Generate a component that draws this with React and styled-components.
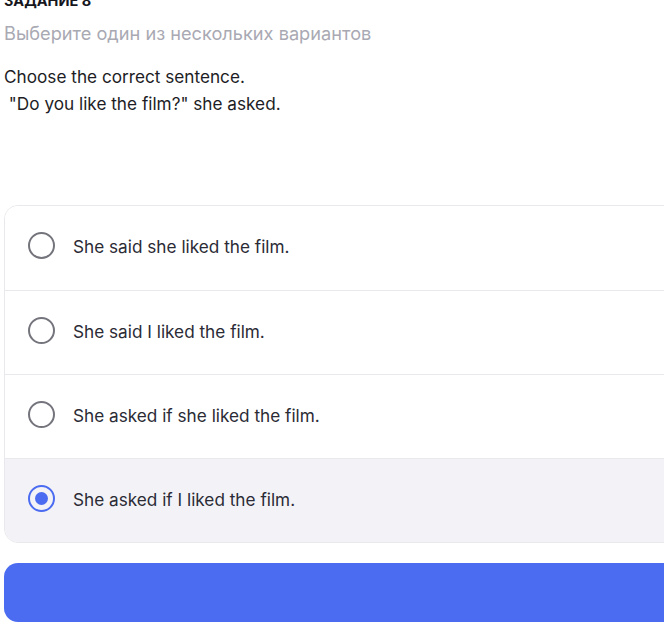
import React, { useState } from "react";
import styled, { createGlobalStyle } from "styled-components";

const Global = createGlobalStyle`
  html, body { margin: 0; padding: 0; background: #ffffff; overflow: hidden; }
  body { font-family: Inter, "Noto Sans", sans-serif; -webkit-font-smoothing: antialiased; }
`;

const Page = styled.div`
  width: 760px;
  padding: 0 0 0 4px;
  margin-top: -9px;
  box-sizing: border-box;
`;

const Title = styled.div`
  font-size: 14.5px;
  line-height: 20px;
  font-weight: 700;
  color: #16161d;
  text-transform: uppercase;
`;

const Subtitle = styled.div`
  margin-top: 8.5px;
  font-size: 18.2px;
  line-height: 27px;
  color: #a9a9b3;
`;

const Question = styled.div`
  margin-top: 16px;
  font-size: 17.2px;
  line-height: 27px;
  color: #1d1d25;
  white-space: pre-wrap;
`;

const Card = styled.div`
  margin-top: 88.5px;
  border: 1px solid #e8e8ed;
  border-radius: 14px;
  overflow: hidden;
`;

const Row = styled.label`
  display: flex;
  align-items: center;
  gap: 18px;
  height: 84px;
  padding: 0 0 5px 23px;
  box-sizing: border-box;
  background: ${(p) => (p.$selected ? "#f3f3f7" : "#ffffff")};
  border-top: ${(p) => (p.$first ? "none" : "1.5px solid #e8e8ed")};
  cursor: pointer;
`;

const Radio = styled.span`
  width: 27px;
  height: 27px;
  box-sizing: border-box;
  border-radius: 50%;
  border: 2.5px solid ${(p) => (p.$checked ? "#4b6cf1" : "#74747d")};
  display: flex;
  align-items: center;
  justify-content: center;
  flex-shrink: 0;
  &::after {
    content: "";
    width: 13px;
    height: 13px;
    border-radius: 50%;
    background: #4b6cf1;
    display: ${(p) => (p.$checked ? "block" : "none")};
  }
`;

const OptionText = styled.span`
  font-size: 17.2px;
  color: #2b2b36;
  padding-top: 2px;
`;

const Submit = styled.button`
  display: block;
  margin-top: 20px;
  width: 100%;
  height: 59px;
  border: none;
  border-radius: 14px;
  background: #4b6cf1;
  cursor: pointer;
`;

const options = [
  "She said she liked the film.",
  "She said I liked the film.",
  "She asked if she liked the film.",
  "She asked if I liked the film.",
];

export default function App() {
  const [sel, setSel] = useState(3);
  return (
    <>
      <Global />
      <Page>
        <Title>Задание 8</Title>
        <Subtitle>Выберите один из нескольких вариантов</Subtitle>
        <Question>
          {"Choose the correct sentence.\n \"Do you like the film?\" she asked."}
        </Question>
        <Card>
          {options.map((o, i) => (
            <Row key={i} $first={i === 0} $selected={sel === i} onClick={() => setSel(i)}>
              <Radio $checked={sel === i} />
              <OptionText>{o}</OptionText>
            </Row>
          ))}
        </Card>
        <Submit aria-label="Ответить" />
      </Page>
    </>
  );
}
